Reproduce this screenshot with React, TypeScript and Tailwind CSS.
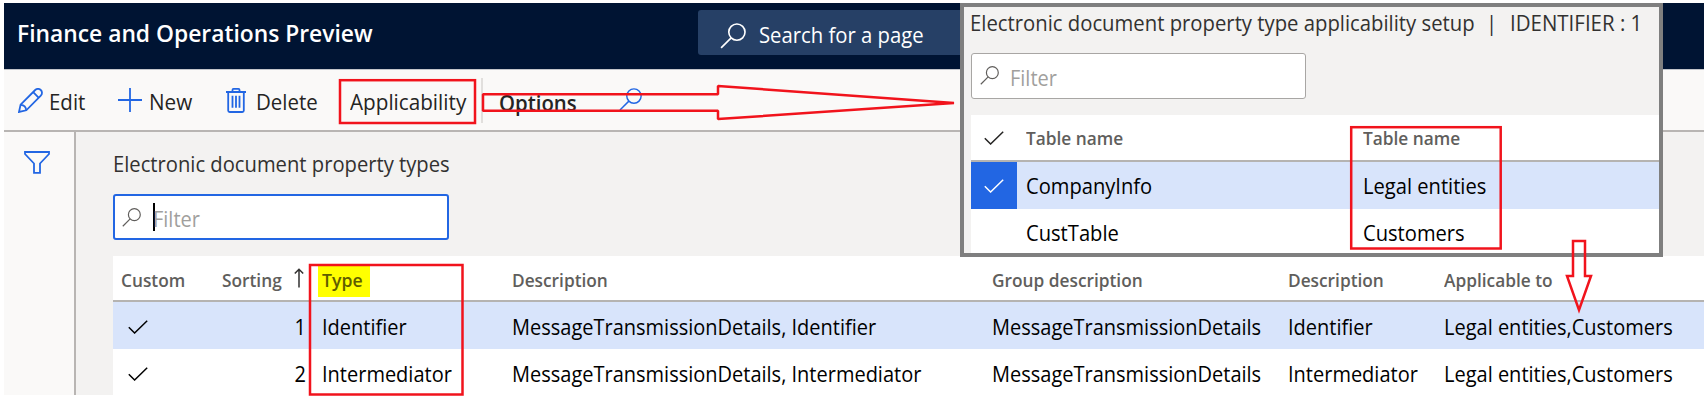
import type { ReactNode } from "react";

const types = [
  {
    sorting: 1,
    type: "Identifier",
    description: "MessageTransmissionDetails, Identifier",
    group: "MessageTransmissionDetails",
    name: "Identifier",
    applicable: "Legal entities,Customers",
  },
  {
    sorting: 2,
    type: "Intermediator",
    description: "MessageTransmissionDetails, Intermediator",
    group: "MessageTransmissionDetails",
    name: "Intermediator",
    applicable: "Legal entities,Customers",
  },
];

const columns = "grid grid-cols-[101px_84px_23px_183px_480px_296px_156px_1fr]";

type TextProps = { children: ReactNode; className?: string; scale?: string };

function Text({ children, className = "", scale = "scale-x-[0.909]" }: TextProps) {
  return <span className={`inline-block origin-left whitespace-pre ${scale} ${className}`}>{children}</span>;
}

function Head({ children }: { children: ReactNode }) {
  return (
    <Text scale="scale-x-[0.96]" className="text-[18px] font-semibold text-[#605e5c]">
      {children}
    </Text>
  );
}

function SearchIcon({ className, width = 1.5 }: { className: string; width?: number }) {
  return (
    <svg viewBox="0 0 24 24" fill="none" stroke="currentColor" strokeWidth={width} className={`shrink-0 ${className}`}>
      <circle cx="15.6" cy="8.4" r="7.5" />
      <path d="M10.3 13.7 1 23" />
    </svg>
  );
}

function CheckIcon({ className = "" }: { className?: string }) {
  return (
    <svg viewBox="0 0 20 14" fill="none" stroke="currentColor" strokeWidth="1.5" className={`h-[14px] w-5 shrink-0 ${className}`}>
      <path d="M.8 7.2 6.6 13 19.2.8" />
    </svg>
  );
}

function PencilIcon() {
  return (
    <svg viewBox="0 0 25 25" fill="none" stroke="currentColor" strokeWidth="1.8" className="h-[25px] w-[25px] shrink-0">
      <path d="M1 24 2.6 16.6 17.2 2a3.9 3.9 0 0 1 5.6 0 3.9 3.9 0 0 1 0 5.6L8.3 22.3Z" />
      <path d="M15.2 4.2 20.8 9.8M2.8 16.8C5.8 17 8 19 8.2 22.2" />
    </svg>
  );
}

function TrashIcon() {
  return (
    <svg viewBox="0 0 20 25" fill="none" stroke="currentColor" strokeWidth="1.8" className="h-[25px] w-5 shrink-0">
      <path d="M0 4h20M6.5 4V1.9c0-.6.4-1 1-1h5c.6 0 1 .4 1 1V4M2.2 4v18.5c0 .9.6 1.5 1.5 1.5h12.6c.9 0 1.5-.6 1.5-1.5V4" />
      <path d="M6.5 7.8v12M10 7.8v12M13.5 7.8v12" />
    </svg>
  );
}

function Toolbar() {
  return (
    <div className="flex h-[60px] items-center bg-[#faf9f8] text-[22px] text-[#252423]">
      <div className="flex w-[100px] items-center pl-[14px] text-[#2266e3]">
        <PencilIcon />
        <Text scale="scale-x-[0.93]" className="ml-[6px] mt-[3px] text-[#252423]">Edit</Text>
      </div>
      <div className="flex w-[122px] items-center pl-[14px] text-[#2266e3]">
        <svg viewBox="0 0 24 24" stroke="currentColor" strokeWidth="1.8" className="h-6 w-6 shrink-0">
          <path d="M12 0v24M0 12h24" />
        </svg>
        <Text scale="scale-x-[0.94]" className="ml-[7px] mt-[3px] text-[#252423]">New</Text>
      </div>
      <div className="flex w-[120px] items-center text-[#2266e3]">
        <TrashIcon />
        <Text scale="scale-x-[0.93]" className="ml-[10px] mt-[3px] text-[#252423]">Delete</Text>
      </div>
      <div className="w-[135px] pl-1">
        <Text scale="scale-x-[0.94]" className="mt-[3px]">Applicability</Text>
      </div>
      <div className="flex h-[45px] w-[138px] items-center border-l-2 border-[#e1dfdd] pl-[16px]">
        <Text scale="scale-x-[0.925]" className="mt-[4px] font-semibold">Options</Text>
      </div>
      <SearchIcon className="-mt-[2px] h-[23px] w-[23px] text-[#2266e3]" />
    </div>
  );
}

function TypesGrid() {
  return (
    <div className="ml-[37px] bg-white">
      <div className={`${columns} h-[46px] items-center border-b-2 border-[#b5b3b1] pt-[4px] pl-[8px]`}>
        <Head>Custom</Head>
        <Head>Sorting</Head>
        <svg viewBox="0 0 10 20" fill="none" stroke="#323130" strokeWidth="1.5" className="-ml-[12px] -mt-[4px] h-5 w-[10px]">
          <path d="M5 1v18.5M.8 5.5 5 1.2l4.2 4.3" />
        </svg>
        <div className="-my-2 -ml-[11px] -mt-[7px] flex h-8 w-[52px] items-center bg-[#ffff00] pl-[4px]">
          <Text scale="scale-x-[0.98]" className="text-[18px] font-semibold text-[#5f5d00]">Type</Text>
        </div>
        <Head>Description</Head>
        <Head>Group description</Head>
        <Head>Description</Head>
        <Head>Applicable to</Head>
      </div>
      {types.map((row) => (
        <div
          key={row.sorting}
          className={`${columns} h-[47px] items-center pl-[8px] pt-[2px] text-[22px] text-black nth-2:bg-[#d8e4fb]`}
        >
          <CheckIcon className="ml-[7px]" />
          <Text className="w-[84px] origin-right text-right">{row.sorting}</Text>
          <span />
          <Text className="-ml-[7px]">{row.type}</Text>
          <Text>{row.description}</Text>
          <Text>{row.group}</Text>
          <Text>{row.name}</Text>
          <Text>{row.applicable}</Text>
        </div>
      ))}
    </div>
  );
}

function ApplicabilityPanel() {
  return (
    <div className="absolute left-[960px] top-[3px] h-[254px] w-[703px] overflow-hidden border-4 border-[#7f7f7f] bg-[#f3f2f1] pl-[7px]">
      <div className="flex h-[31px] items-center text-[22px] text-[#323130]">
        <Text scale="scale-x-[0.922]" className="-ml-px">Electronic document property type applicability setup</Text>
        <Text scale="scale-x-[0.922]" className="-ml-[31px]">|</Text>
        <Text scale="scale-x-[0.93]" className="ml-[12px]">IDENTIFIER : 1</Text>
      </div>
      <div className="mt-[15px] flex h-[46px] w-[335px] items-center rounded-[3px] border border-[#a8a6a4] bg-white pl-2 text-[#605e5c]">
        <SearchIcon className="mb-[1px] h-[19px] w-[19px]" />
        <Text className="ml-[11px] mt-[3px] text-[22px] text-[#a19f9d]">Filter</Text>
      </div>
      <div className="mt-4 bg-white">
        <div className="grid h-[47px] grid-cols-[55px_337px_1fr] items-center border-b-2 border-[#b5b3b1] pt-[1px]">
          <CheckIcon className="ml-[13px] text-[#252423]" />
          <Head>Table name</Head>
          <Head>Table name</Head>
        </div>
        <div className="grid h-[47px] grid-cols-[46px_9px_337px_1fr] items-center bg-[#d8e4fb] text-[22px] text-black">
          <div className="flex h-full items-center bg-[#2266e3] pl-[13px] text-white">
            <CheckIcon />
          </div>
          <span />
          <Text scale="scale-x-[0.915]">CompanyInfo</Text>
          <Text scale="scale-x-[0.915]">Legal entities</Text>
        </div>
        <div className="grid h-[47px] grid-cols-[55px_337px_1fr] items-center text-[22px] text-black">
          <span />
          <Text scale="scale-x-[0.915]">CustTable</Text>
          <Text scale="scale-x-[0.915]">Customers</Text>
        </div>
      </div>
    </div>
  );
}

function Callouts() {
  return (
    <svg viewBox="0 0 1707 403" fill="none" stroke="#f1131c" strokeWidth="2.5" className="absolute left-0 top-0 h-[403px] w-[1707px]">
      <rect x="340" y="80.2" width="135" height="42.8" />
      <rect x="310" y="265" width="152.5" height="129.5" />
      <rect x="1351.2" y="127.2" width="149.5" height="121.3" />
      <path d="M483 94.2H718V86L954 103 718 119V110.800H483Z" strokeLinejoin="bevel" />
      <path d="M1573 241H1585V276H1591L1579 310 1567 276H1573Z" />
    </svg>
  );
}

export default function App() {
  return (
    <div className="relative h-[403px] w-[1707px] overflow-hidden bg-white pl-1 pr-[3px] pt-[3px] font-['Open_Sans','Noto_Sans',sans-serif]">
      <header className="flex h-[66px] bg-[#001433]">
        <div className="flex w-[694px] items-center pb-[6px] pl-[13px]">
          <Text scale="scale-x-[0.992]" className="text-[23px] font-semibold text-white">Finance and Operations Preview</Text>
        </div>
        <div className="mt-[7px] flex h-[45px] w-[300px] items-center rounded-[3px] bg-[#264066] pl-[22px] text-white">
          <SearchIcon className="mt-[7px] h-[26px] w-[26px]" />
          <Text scale="scale-x-[0.922]" className="ml-[13px] mt-[4px] text-[22px]">Search for a page</Text>
        </div>
      </header>
      <div className="border-b-2 border-t border-b-[#b8b5b3] border-t-[#c3c5ca]">
        <Toolbar />
      </div>
      <div className="flex h-[263px]">
        <aside className="w-[72px] border-r-2 border-[#b8b5b3] bg-[#faf9f8] pl-5 pt-[19px] text-[#2266e3]">
          <svg viewBox="0 0 26 23" fill="none" stroke="currentColor" strokeWidth="1.8" className="h-[23px] w-[26px]">
            <path d="M1 1H25V3L16 12.5V21.8H10V12.5L1 3Z" />
          </svg>
        </aside>
        <main className="flex-1 bg-[#f3f2f1]">
          <div className="flex h-[62px] items-center pl-[37px] pt-[1px] text-[22px] text-[#323130]">
            <Text scale="scale-x-[0.918]">Electronic document property types</Text>
          </div>
          <div className="mb-4 ml-[37px] flex h-[46px] w-[336px] items-center rounded-[3px] border-2 border-[#2266e3] bg-white pl-[7px] text-[#605e5c]">
            <SearchIcon className="mt-[1px] h-[19px] w-[19px]" />
            <span className="ml-[12px] h-[28px] w-[2px] bg-black" />
            <Text className="-ml-[2px] mt-[3px] text-[22px] text-[#a19f9d]">Filter</Text>
          </div>
          <TypesGrid />
        </main>
      </div>
      <ApplicabilityPanel />
      <Callouts />
    </div>
  );
}
